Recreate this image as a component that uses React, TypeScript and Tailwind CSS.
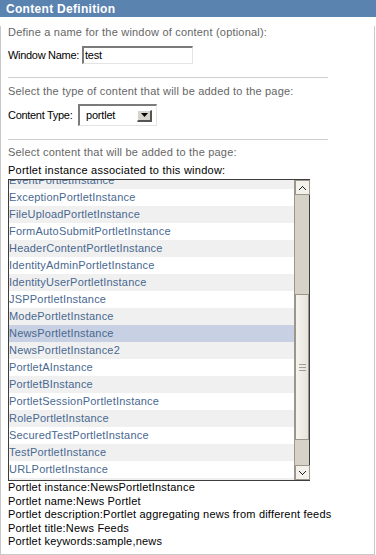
import React from "react";

const items = [
  "AjaxPortletInstance",
  "CMSPortletInstance",
  "CalendarPortletInstance",
  "CatalogPortletInstance",
  "CurrentUsersPortletInstance",
  "DashboardConfigPortletInstance",
  "EventPortletInstance",
  "ExceptionPortletInstance",
  "FileUploadPortletInstance",
  "FormAutoSubmitPortletInstance",
  "HeaderContentPortletInstance",
  "IdentityAdminPortletInstance",
  "IdentityUserPortletInstance",
  "JSPPortletInstance",
  "ModePortletInstance",
  "NewsPortletInstance",
  "NewsPortletInstance2",
  "PortletAInstance",
  "PortletBInstance",
  "PortletSessionPortletInstance",
  "RolePortletInstance",
  "SecuredTestPortletInstance",
  "TestPortletInstance",
  "URLPortletInstance",
];

// list is scrolled so that EventPortletInstance sits 8px above the top edge
const firstVisible = 6;
const selected = "NewsPortletInstance";

const details = [
  "Portlet instance:NewsPortletInstance",
  "Portlet name:News Portlet",
  "Portlet description:Portlet aggregating news from different feeds",
  "Portlet title:News Feeds",
  "Portlet keywords:sample,news",
];

const Arrow: React.FC<{ down?: boolean }> = ({ down }) => (
  <svg width="7" height="4" viewBox="0 0 7 4" className={down ? "" : "rotate-180"}>
    <path d="M0 0h1v1h1v1h1v1h1V2h1V1h1V0h1v1H6v1H5v1H4v1H3V3H2V2H1V1H0z" fill="#222" />
  </svg>
);

const ScrollButton: React.FC<{ down?: boolean }> = ({ down }) => (
  <div className="h-[15px] w-[15px] flex items-center justify-center bg-[#f3f1ec] border border-[#9d968a] shrink-0">
    <Arrow down={down} />
  </div>
);

export default function App() {
  const visible = items.slice(firstVisible);
  return (
    <div className="w-[375px] bg-white text-[11px] text-black" style={{ fontFamily: '"Liberation Sans", Arial, sans-serif' }}>
      <div className="h-[17px] w-[376px] bg-[#5b83b0] pl-[6px] text-[12px] font-bold leading-[18px] text-white tracking-[0.3px]">
        Content Definition
      </div>
      <div className="border-l border-r border-b border-[#c9c9c9] pl-[7px] pb-[5px]">
        <div className="mt-[9px] leading-[13px] text-[#666] tracking-[0.2px]">
          Define a name for the window of content (optional):
        </div>
        <div className="mt-[7px] flex items-center h-[18px]">
          <span className="w-[74px] tracking-[-0.3px]">Window Name:</span>
          <div className="h-[18px] w-[111px] border-t-2 border-l-2 border-t-[#7b7b7b] border-l-[#7b7b7b] border-b border-r border-b-[#e4e4e4] border-r-[#e4e4e4] pl-[1px] leading-[15px] tracking-[-0.2px]">
            test
          </div>
        </div>
        <div className="mt-[13px] h-px w-[320px] bg-[#cfcfcf]" />

        <div className="mt-[7px] leading-[13px] text-[#666] tracking-[0.2px]">
          Select the type of content that will be added to the page:
        </div>
        <div className="mt-[6px] flex items-center h-[22px]">
          <span className="w-[70px] tracking-[-0.3px]">Content Type:</span>
          <div className="h-[22px] w-[79px] flex items-center border-t-2 border-l-2 border-t-[#7b7b7b] border-l-[#7b7b7b] border-b border-r border-b-[#e4e4e4] border-r-[#e4e4e4]">
            <span className="ml-[6px] w-[51px] tracking-[-0.2px]">portlet</span>
            <div className="h-[12px] w-[15px] flex items-center justify-center bg-[#d8d4cc] border-r-2 border-b-2 border-r-[#555] border-b-[#555] border-t border-l border-t-white border-l-white">
              <svg width="7" height="4" viewBox="0 0 7 4">
                <path d="M0 0h7L3.5 4z" fill="#000" />
              </svg>
            </div>
          </div>
        </div>
        <div className="mt-[13px] h-px w-[320px] bg-[#cfcfcf]" />

        <div className="mt-[6px] leading-[13px] text-[#666] tracking-[0.2px]">
          Select content that will be added to the page:
        </div>
        <div className="mt-[5px] leading-[13px] tracking-[0.25px]">
          Portlet instance associated to this window:
        </div>

        <div className="mt-[2px] flex h-[302px] w-[302px] border border-[#3d3d3d]">
          <div className="flex-1 overflow-hidden">
            <div className="-mt-[8px]">
              {visible.map((name, i) => {
                const idx = i + firstVisible;
                const bg =
                  name === selected
                    ? "bg-[#c8d1e3]"
                    : idx % 2 === 0
                    ? "bg-[#f0f0f0]"
                    : "bg-white";
                return (
                  <div key={name} className={`h-[17px] leading-[17px] text-[#486890] tracking-[0.2px] whitespace-nowrap ${bg}`}>
                    {name}
                  </div>
                );
              })}
              {/* next row peeks in below the last one */}
              <div className="h-[17px] bg-[#f0f0f0]" />
            </div>
          </div>
          <div className="w-[15px] flex flex-col bg-[#d7d2c7] border-l border-[#9d968a]">
            <ScrollButton />
            <div className="h-[99px]" />
            <div className="h-[146px] border border-[#9d968a] bg-gradient-to-r from-[#f6f4f0] to-[#e7e3dc] flex flex-col items-center justify-center gap-[2px]">
              <div className="h-px w-[7px] bg-[#a49d90]" />
              <div className="h-px w-[7px] bg-[#a49d90]" />
              <div className="h-px w-[7px] bg-[#a49d90]" />
            </div>
            <div className="flex-1" />
            <ScrollButton down />
          </div>
        </div>

        <div className="leading-[13.5px] tracking-[0.2px]">
          {details.map((d) => (
            <div key={d}>{d}</div>
          ))}
        </div>
      </div>
    </div>
  );
}
